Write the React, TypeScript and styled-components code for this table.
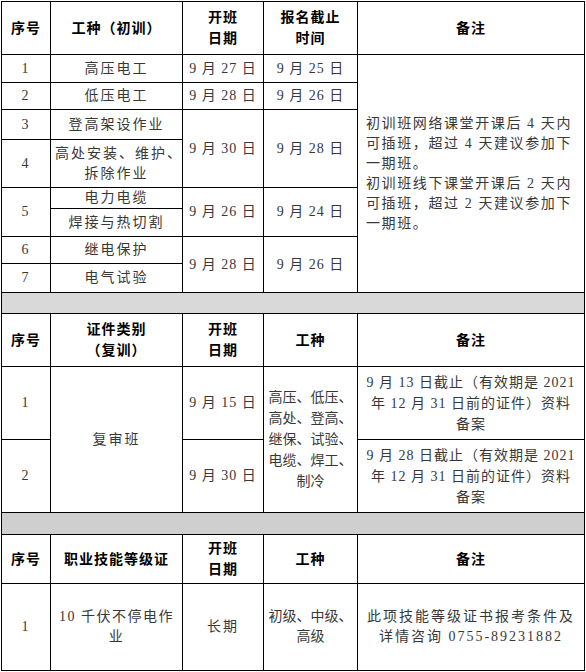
import styled, { createGlobalStyle } from "styled-components";

const GlobalStyle = createGlobalStyle`
  html, body {
    margin: 0;
    padding: 0;
    background: #fff;
  }
  body {
    padding: 1px 0 0 1px;
    font-family: "Liberation Serif", "Noto Sans CJK SC", serif;
  }
`;

const Table = styled.table`
  width: 583px;
  border-collapse: collapse;
  table-layout: fixed;
  font-size: 14px;
  color: #383838;
`;

const Row = styled.tr<{ $h: number }>`
  height: ${({ $h }) => $h}px;
`;

const Cell = styled.td<{ $head?: boolean; $left?: boolean; $spacing?: number }>`
  border: 1px solid #000;
  padding: 0 4px;
  vertical-align: middle;
  text-align: ${({ $left }) => ($left ? "left" : "center")};
  line-height: ${({ $head }) => ($head ? "21px" : "20px")};
  letter-spacing: ${({ $head, $spacing }) =>
    $spacing !== undefined ? $spacing : $head ? 1 : 2}px;
  font-weight: ${({ $head }) => ($head ? 700 : 400)};
  color: ${({ $head }) => ($head ? "#000" : "#383838")};
  white-space: nowrap;
  overflow: hidden;
`;

const Band = styled.td<{ $shade: string }>`
  border: 1px solid #000;
  background: ${({ $shade }) => $shade};
  padding: 0;
`;

const Line = styled.span`
  display: block;
`;

const Remark = styled.div`
  padding-left: 4px;
  letter-spacing: 1.6px;
`;

const colWidths = [49, 132, 81, 94, 227];

const Lines = ({ items }: { items: string[] }) => (
  <>
    {items.map((t, i) => (
      <Line key={i}>{t}</Line>
    ))}
  </>
);

const Date = ({ text, rows }: { text: string; rows?: number }) => (
  <Cell rowSpan={rows} $spacing={1}>
    {text}
  </Cell>
);

const App = () => {
  const firstRemark = [
    "初训班网络课堂开课后 4 天内",
    "可插班，超过 4 天建议参加下",
    "一期班。",
    "初训班线下课堂开课后 2 天内",
    "可插班，超过 2 天建议参加下",
    "一期班。",
  ];

  return (
    <>
      <GlobalStyle />
      <Table>
        <colgroup>
          {colWidths.map((w, i) => (
            <col key={i} style={{ width: w }} />
          ))}
        </colgroup>
        <tbody>
          {/* 初训 */}
          <Row $h={53}>
            <Cell $head>序号</Cell>
            <Cell $head>工种（初训）</Cell>
            <Cell $head>
              <Lines items={["开班", "日期"]} />
            </Cell>
            <Cell $head>
              <Lines items={["报名截止", "时间"]} />
            </Cell>
            <Cell $head>备注</Cell>
          </Row>
          <Row $h={28}>
            <Cell>1</Cell>
            <Cell>高压电工</Cell>
            <Date text="9 月 27 日" />
            <Date text="9 月 25 日" />
            <Cell $left rowSpan={8}>
              <Remark>
                <Lines items={firstRemark} />
              </Remark>
            </Cell>
          </Row>
          <Row $h={27}>
            <Cell>2</Cell>
            <Cell>低压电工</Cell>
            <Date text="9 月 28 日" />
            <Date text="9 月 26 日" />
          </Row>
          <Row $h={30}>
            <Cell>3</Cell>
            <Cell>登高架设作业</Cell>
            <Date text="9 月 30 日" rows={2} />
            <Date text="9 月 28 日" rows={2} />
          </Row>
          <Row $h={48}>
            <Cell>4</Cell>
            <Cell>
              <Lines items={["高处安装、维护、", "拆除作业"]} />
            </Cell>
          </Row>
          <Row $h={21}>
            <Cell rowSpan={2}>5</Cell>
            <Cell>电力电缆</Cell>
            <Date text="9 月 26 日" rows={2} />
            <Date text="9 月 24 日" rows={2} />
          </Row>
          <Row $h={28}>
            <Cell>焊接与热切割</Cell>
          </Row>
          <Row $h={27}>
            <Cell>6</Cell>
            <Cell>继电保护</Cell>
            <Date text="9 月 28 日" rows={2} />
            <Date text="9 月 26 日" rows={2} />
          </Row>
          <Row $h={29}>
            <Cell>7</Cell>
            <Cell>电气试验</Cell>
          </Row>

          <Row $h={21}>
            <Band colSpan={5} $shade="#d9d9d9" />
          </Row>

          {/* 复训 */}
          <Row $h={53}>
            <Cell $head>序号</Cell>
            <Cell $head>
              <Lines items={["证件类别", "（复训）"]} />
            </Cell>
            <Cell $head>
              <Lines items={["开班", "日期"]} />
            </Cell>
            <Cell $head>工种</Cell>
            <Cell $head>备注</Cell>
          </Row>
          <Row $h={73}>
            <Cell>1</Cell>
            <Cell rowSpan={2}>复审班</Cell>
            <Date text="9 月 15 日" />
            <Cell rowSpan={2} $spacing={0} style={{ lineHeight: "21px" }}>
              <Lines
                items={["高压、低压、", "高处、登高、", "继保、试验、", "电缆、焊工、", "制冷"]}
              />
            </Cell>
            <Cell $spacing={1} style={{ lineHeight: "21px" }}>
              <Lines
                items={["9 月 13 日截止（有效期是 2021", "年 12 月 31 日前的证件）资料", "备案"]}
              />
            </Cell>
          </Row>
          <Row $h={73}>
            <Cell>2</Cell>
            <Date text="9 月 30 日" />
            <Cell $spacing={1} style={{ lineHeight: "21px" }}>
              <Lines
                items={["9 月 28 日截止（有效期是 2021", "年 12 月 31 日前的证件）资料", "备案"]}
              />
            </Cell>
          </Row>

          <Row $h={22}>
            <Band colSpan={5} $shade="#cfcfcf" />
          </Row>

          {/* 职业技能等级证 */}
          <Row $h={49}>
            <Cell $head>序号</Cell>
            <Cell $head>职业技能等级证</Cell>
            <Cell $head>
              <Lines items={["开班", "日期"]} />
            </Cell>
            <Cell $head>工种</Cell>
            <Cell $head>备注</Cell>
          </Row>
          <Row $h={87}>
            <Cell>1</Cell>
            <Cell $spacing={1.5}>
              <Lines items={["10 千伏不停电作", "业"]} />
            </Cell>
            <Cell>长期</Cell>
            <Cell $spacing={0}>
              <Lines items={["初级、中级、", "高级"]} />
            </Cell>
            <Cell>
              <Lines items={["此项技能等级证书报考条件及", "详情咨询 0755-89231882"]} />
            </Cell>
          </Row>
        </tbody>
      </Table>
    </>
  );
};

export default App;
